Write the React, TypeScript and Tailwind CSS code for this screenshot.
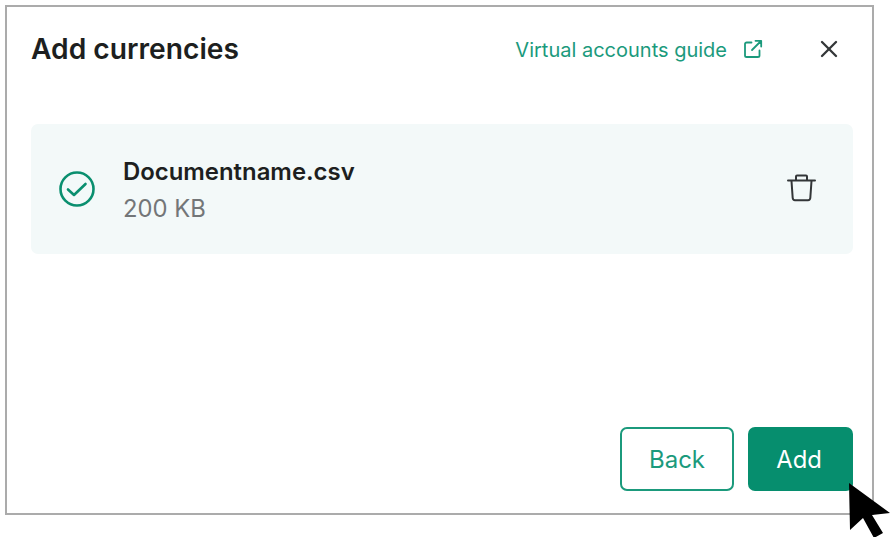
import { X } from 'lucide-react';

function ExternalIcon() {
  return (
    <svg width="20" height="20" viewBox="0 0 20 20" fill="none" stroke="currentColor" strokeWidth="1.8" strokeLinecap="round" strokeLinejoin="round" className="-mt-[1px]">
      <path d="M8.500 3.500H3.600A1.600 1.600 0 0 0 2 5.100v11.300A1.600 1.600 0 0 0 3.600 18h11.300a1.600 1.600 0 0 0 1.600-1.600v-5" />
      <path d="M12.500 1.800h5.700v5.700M18 2l-9 9" />
    </svg>
  );
}

function CheckIcon() {
  return (
    <svg width="36" height="36" viewBox="0 0 36 36" fill="none" stroke="#0a8f6f" strokeWidth="2.6" strokeLinecap="round" strokeLinejoin="round">
      <circle cx="18" cy="18" r="16.500" />
      <path d="M9 18.500l6 5.500L26.500 13" />
    </svg>
  );
}

function TrashIcon() {
  return (
    <svg width="30" height="30" viewBox="0 0 30 30" fill="none" stroke="#333638" strokeWidth="2" strokeLinecap="round" strokeLinejoin="round" className="-mt-[2px]">
      <path d="M2 7.500h27" />
      <path d="M10 7V3.400c0-.6.4-1 1-1h9c.6 0 1 .4 1 1V7" />
      <path d="M5.500 8l1.200 17c.1 1.300 1 2.200 2.300 2.200h13c1.300 0 2.200-.9 2.300-2.200L25.500 8" />
    </svg>
  );
}

function Cursor() {
  return (
    <svg width="44" height="54" viewBox="0 0 44 54" className="absolute left-[848px] top-[483px]">
      <path d="M1 0L42 30L24 32L35 50L26 55L15 35L2 47Z" fill="#000" />
    </svg>
  );
}

export default function App() {
  return (
    <div className="relative h-[548px] w-[893px] bg-white pl-[5px] pt-[5px] font-['Inter',sans-serif]">
      <div className="flex h-[510px] w-[869px] flex-col border-2 border-[#ababab] bg-white pb-[22px] pl-[24px] pr-[19px]">
        {/* Header */}
        <div className="flex h-[85px] items-center">
          <h1 className="text-[28.200px] font-semibold text-[#1d1f20]">Add currencies</h1>
          <a className="ml-auto flex items-center gap-[16px] text-[20px] text-[#1b9a7c]">
            Virtual accounts guide
            <ExternalIcon />
          </a>
          <X className="-mt-[1px] ml-[52px] mr-[10px] text-[#333638]" size={28} strokeWidth={2} />
        </div>

        {/* Uploaded file */}
        <div className="mt-[32px] flex h-[130px] items-center rounded-[7px] bg-[#f3f9f9] pl-[28px] pr-[37px]">
          <CheckIcon />
          <div className="ml-[28px] mt-[2px] flex flex-col gap-[5px]">
            <span className="text-[23.900px] font-semibold leading-[32px] text-[#1d1f20]">Documentname.csv</span>
            <span className="text-[23.800px] leading-[32px] text-[#737678]">200 KB</span>
          </div>
          <span className="ml-auto">
            <TrashIcon />
          </span>
        </div>

        {/* Actions */}
        <div className="mt-auto flex justify-end gap-[14px]">
          <button className="h-[64px] w-[114px] rounded-[7px] border-2 border-[#1b9a7c] pt-[1px] text-[24px] text-[#1b9a7c]">Back</button>
          <button className="h-[64px] w-[105px] rounded-[7px] bg-[#068e6e] pr-[3px] pt-[1px] text-[23.800px] text-white">Add</button>
        </div>
      </div>
      <Cursor />
    </div>
  );
}
